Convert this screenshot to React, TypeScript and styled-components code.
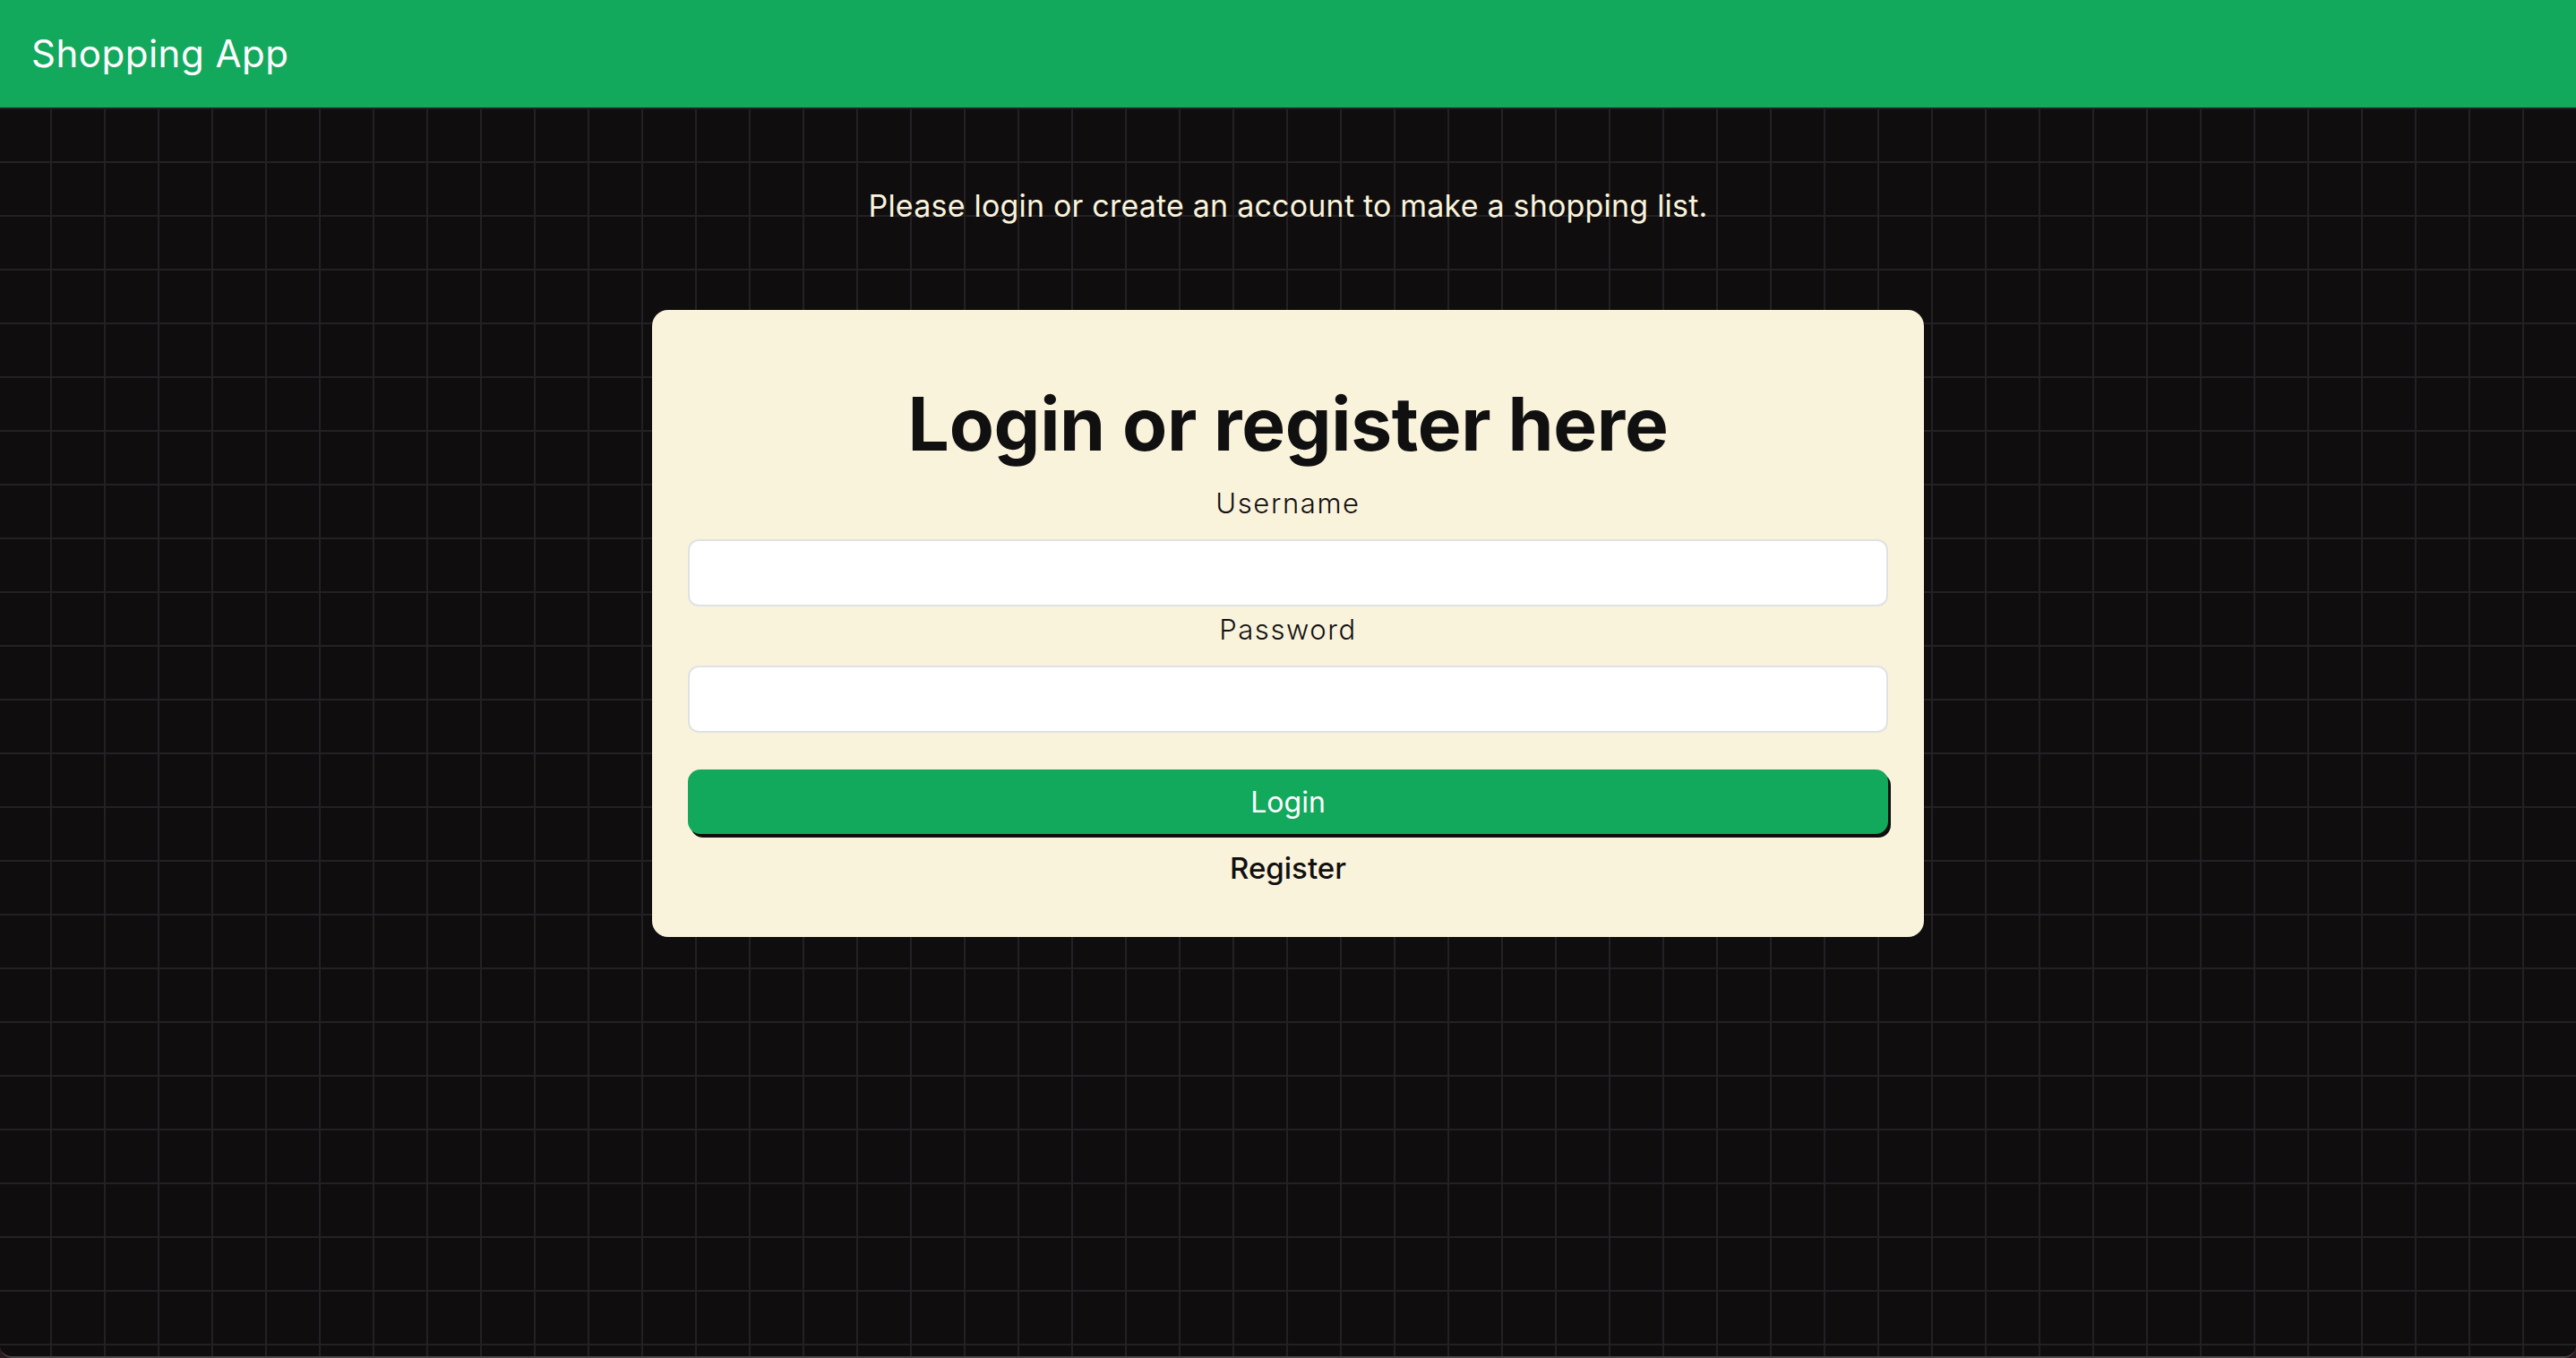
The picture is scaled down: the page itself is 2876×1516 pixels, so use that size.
import {FormEventHandler, FunctionComponent, useState} from 'react'
import styled, {createGlobalStyle} from 'styled-components'

const GlobalStyle = createGlobalStyle`
    html, body {
        margin: 0;
        padding: 0;
        background: #2a1c21;
    }

    * {
        box-sizing: border-box;
    }
`

const Page = styled.div`
    display: flex;
    flex-direction: column;
    min-height: 100vh;
    font-family: Inter, "Noto Sans", sans-serif;
    background: #0f0d0e;
    border-bottom: 2px solid #4a4749;
    border-radius: 0 0 14px 14px;
    overflow: hidden;
`

const Header = styled.header`
    display: flex;
    align-items: center;
    height: 120px;
    padding-left: 35px;
    background: #13a95d;
`

const Brand = styled.h1`
    margin: 0;
    font-size: 42px;
    font-weight: 400;
    line-height: 52px;
    letter-spacing: 0.5px;
    color: #ffffff;
`

const Main = styled.main`
    flex: 1;
    display: flex;
    flex-direction: column;
    align-items: center;
    padding-top: 88px;
    background-color: #0f0d0e;
    background-image: linear-gradient(to right, #232123 2px, transparent 2px),
    linear-gradient(to bottom, #232123 2px, transparent 2px);
    background-size: 60px 60px;
    background-position: 56px 0;
`

const Intro = styled.p`
    margin: 0 0 94px;
    font-size: 34px;
    line-height: 44px;
    font-weight: 400;
    letter-spacing: 0.2px;
    color: #faf3dc;
`

const Card = styled.form`
    display: flex;
    flex-direction: column;
    align-items: center;
    width: 1420px;
    padding: 80px 40px 57px;
    background: #faf3dc;
    border-radius: 18px;
`

const Title = styled.h2`
    margin: 0 0 20px;
    font-size: 82px;
    line-height: 96px;
    font-weight: 700;
    letter-spacing: -0.3px;
    color: #111011;
`

const Label = styled.label`
    margin-bottom: 20px;
    font-size: 31px;
    line-height: 40px;
    font-weight: 300;
    letter-spacing: 1.6px;
    color: #111011;
`

const Input = styled.input`
    width: 100%;
    height: 75px;
    margin-bottom: ${({$last}: { $last?: boolean }) => ($last ? '41px' : '6px')};
    padding: 0 20px;
    font: inherit;
    font-size: 30px;
    background: #ffffff;
    border: 2px solid #dfe1e4;
    border-radius: 12px;
    outline: none;
`

const LoginButton = styled.button`
    width: 100%;
    height: 72px;
    margin-bottom: 18px;
    font: inherit;
    font-size: 32px;
    font-weight: 400;
    color: #ffffff;
    background: #13a95d;
    border: none;
    border-radius: 14px;
    box-shadow: 3px 4px 0 #0f0d0e;
    cursor: pointer;
`

const RegisterButton = styled.button`
    padding: 0;
    font: inherit;
    font-size: 33px;
    line-height: 40px;
    font-weight: 500;
    color: #111011;
    background: inherit;
    border: none;
    cursor: pointer;
`

const App: FunctionComponent = () => {
    const [username, setUsername] = useState('')
    const [password, setPassword] = useState('')

    const login: FormEventHandler<HTMLFormElement> = (evt) => {
        evt.preventDefault()
    }

    return (
        <Page>
            <GlobalStyle/>
            <Header>
                <Brand>Shopping App</Brand>
            </Header>
            <Main>
                <Intro>Please login or create an account to make a shopping list.</Intro>
                <Card onSubmit={login}>
                    <Title>Login or register here</Title>
                    <Label htmlFor="username">Username</Label>
                    <Input id="username" type="text" value={username}
                           onChange={evt => setUsername(evt.target.value)}/>
                    <Label htmlFor="password">Password</Label>
                    <Input id="password" type="password" $last value={password}
                           onChange={evt => setPassword(evt.target.value)}/>
                    <LoginButton type="submit">Login</LoginButton>
                    <RegisterButton type="button">Register</RegisterButton>
                </Card>
            </Main>
        </Page>
    )
}

export default App
